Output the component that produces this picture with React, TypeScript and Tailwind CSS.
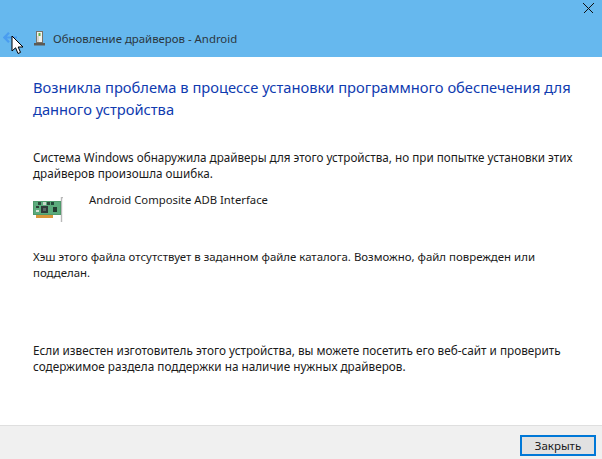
const font = "font-['Noto_Sans','Open_Sans',sans-serif]";

const CloseIcon = () => (
  <svg width="11" height="11" viewBox="0 0 11 11" shapeRendering="crispEdges">
    <path d="M0.5 0.5 L10.5 10.5 M10.5 0.5 L0.5 10.5" stroke="#111" strokeWidth="1" fill="none" />
  </svg>
);

const BackArrow = () => (
  <svg width="14" height="11" viewBox="0 0 14 11">
    <path d="M6 0.8 L1.4 5.5 L6 10.2 M1.4 5.5 H14" stroke="#4a9df0" strokeWidth="2.2" fill="none" />
  </svg>
);

const DeviceIcon = () => (
  <svg width="11" height="15" viewBox="0 0 11 15">
    <rect x="2.5" y="0.5" width="6" height="11" fill="#f2f2ee" stroke="#77736a" />
    <rect x="4.5" y="2" width="2" height="3" fill="#5fb04a" />
    <rect x="3.5" y="5" width="1" height="6" fill="#bdbab2" />
    <rect x="0" y="12" width="11" height="2.5" fill="#5c5a54" />
  </svg>
);

const Cursor = () => (
  <svg width="13" height="20" viewBox="0 0 13 20">
    <path
      d="M1 1 V16 L4.6 12.8 L7 18.5 L9.5 17.4 L7.2 12 H12 Z"
      fill="#fff"
      stroke="#000"
      strokeWidth="1"
      strokeLinejoin="miter"
    />
  </svg>
);

const NetworkCard = () => (
  <svg width="30" height="25" viewBox="0 0 30 25">
    <path d="M30 0.5 H28.5 V25" stroke="#b9b9b9" strokeWidth="1.4" fill="none" />
    <rect x="0" y="4" width="28" height="14" fill="#4f9a6b" />
    <rect x="1" y="5" width="26" height="12" fill="#5cab7c" />
    <rect x="8" y="9" width="7" height="7" fill="#2f3a38" />
    <rect x="10" y="11" width="3" height="3" fill="#5a6664" />
    <rect x="5" y="5" width="3" height="3" fill="#2d4a3c" />
    <rect x="10" y="5" width="3" height="3" fill="#c8d6c8" />
    <rect x="14" y="5" width="3" height="3" fill="#2d4a3c" />
    <rect x="18" y="5" width="3" height="3" fill="#24483a" />
    <rect x="3" y="9" width="3" height="2" fill="#2d3f38" />
    <rect x="3" y="13" width="3" height="2" fill="#d8e2d8" />
    <rect x="20" y="10" width="4" height="5" fill="#233b30" />
    <rect x="3" y="18" width="17" height="3" fill="#d8973a" />
  </svg>
);

export default function App() {
  return (
    <div className={`${font} relative flex h-[459px] w-[602px] flex-col overflow-hidden bg-white text-[11.7px] text-[#1a1a1a]`}>
      {/* title bar */}
      <div className="flex h-[57px] flex-col bg-[#66b8ee]">
        <div className="flex h-[27px] items-start justify-end pr-[8px] pt-[3px]">
          <CloseIcon />
        </div>
        <div className="flex h-[30px] items-start pl-[3px] pt-[3px]">
          <div className="mt-[2px]">
            <BackArrow />
          </div>
          <div className="ml-[17px] mt-[1px]">
            <DeviceIcon />
          </div>
          <span className="ml-[8px] text-[11.4px] leading-[17px] text-[#2b3640]">Обновление драйверов - Android</span>
        </div>
      </div>

      {/* body */}
      <div className="flex flex-1 flex-col whitespace-nowrap pl-[33px]">
        <h1 className="mt-[19px] text-[14.7px] font-normal leading-[22px] text-[#0f3bb0]">
          Возникла проблема в процессе установки программного обеспечения для
          <br />
          данного устройства
        </h1>
        <p className="mt-[29px] leading-[16px]">
          Система Windows обнаружила драйверы для этого устройства, но при попытке установки этих
          <br />
          драйверов произошла ошибка.
        </p>
        <div className="mt-[11px] flex items-start">
          <div className="mt-[5px]">
            <NetworkCard />
          </div>
          <span className="ml-[26px] text-[11.3px] leading-[16px]">Android Composite ADB Interface</span>
        </div>
        <p className="mt-[27px] text-[11.43px] leading-[16px]">
          Хэш этого файла отсутствует в заданном файле каталога. Возможно, файл поврежден или
          <br />
          подделан.
        </p>
        <p className="mt-[61px] text-[11.75px] leading-[16px]">
          Если известен изготовитель этого устройства, вы можете посетить его веб-сайт и проверить
          <br />
          содержимое раздела поддержки на наличие нужных драйверов.
        </p>
      </div>

      {/* footer */}
      <div className="flex h-[34px] items-start justify-end border-t border-[#dfdfdf] bg-[#f0f0f0] pr-[6px] pt-[9px]">
        <button className="flex h-[21px] w-[76px] items-center justify-center border-2 border-[#0078d7] bg-[#e1e1e1] text-[11.5px] text-[#1a1a1a]">
          Закрыть
        </button>
      </div>

      {/* mouse pointer */}
      <div className="absolute left-[11px] top-[35px]">
        <Cursor />
      </div>
    </div>
  );
}
